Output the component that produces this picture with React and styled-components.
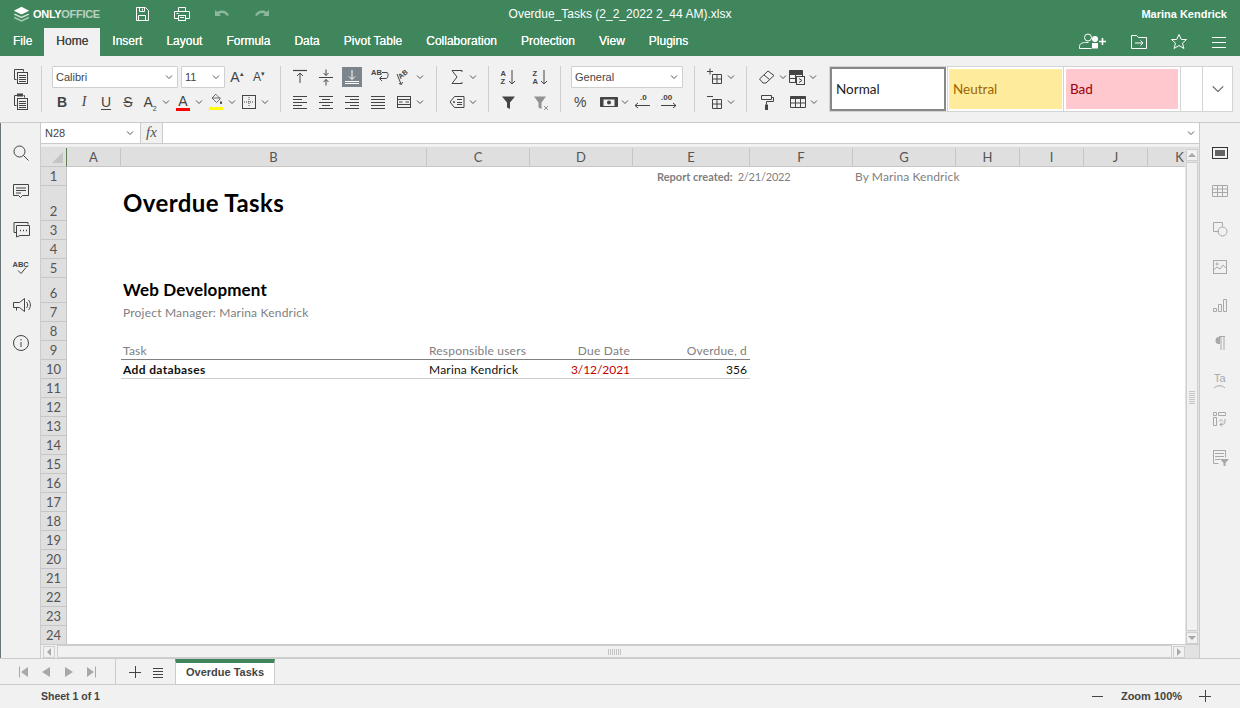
import React from 'react';
import styled, { createGlobalStyle } from 'styled-components';

const GlobalStyle = createGlobalStyle`
  html, body {
    margin: 0;
    padding: 0;
    height: 100%;
    overflow: hidden;
    background: #f1f1f1;
  }
`;

const UI_FONT = `"Liberation Sans", Arial, sans-serif`;
const CELL_FONT = `Lato, "Open Sans", sans-serif`;
const GREEN = '#40865c';
const LINE = '#cbcbcb';

const Page = styled.div`
  width: 1240px;
  height: 708px;
  display: flex;
  flex-direction: column;
  font-family: ${UI_FONT};
  font-size: 12px;
  color: #444;
`;

const TitleBar = styled.header`
  height: 28px;
  background: ${GREEN};
  color: #fff;
  display: grid;
  grid-template-columns: 1fr auto 1fr;
  align-items: center;
`;

const TitleLeft = styled.div`
  display: flex;
  align-items: center;
  padding-left: 13px;
`;

const Logo = styled.div`
  width: 87px;
  margin-right: 32px;
  display: flex;
  align-items: center;
  gap: 3px;
  font-size: 11px;
  font-weight: bold;
  letter-spacing: -0.3px;
  color: #fff;
  span { opacity: 0.62; }
`;

const QuickActions = styled.div`
  display: flex;
  gap: 20px;
`;

const DocName = styled.div`
  font-size: 12px;
`;

const UserName = styled.div`
  justify-self: end;
  padding-right: 13px;
  font-size: 11px;
  font-weight: bold;
`;

const TabBar = styled.nav`
  height: 28px;
  background: ${GREEN};
  display: flex;
  padding-left: 1px;
`;

const Tab = styled.div`
  padding: 0 12px;
  line-height: 27px;
  font-size: 12px;
  color: ${p => (p.$active ? '#444' : '#fff')};
  background: ${p => (p.$active ? '#f1f1f1' : 'transparent')};
  text-shadow: 0 0 0.4px currentColor;
`;

const TabActions = styled.div`
  margin-left: auto;
  display: flex;
  align-items: center;
  padding-right: 1px;
  color: #fff;
`;

const TabAction = styled.div`
  width: ${p => p.$w || 40}px;
  display: flex;
  justify-content: center;
`;

const Toolbar = styled.section`
  height: 66px;
  box-sizing: content-box;
  border-bottom: 1px solid ${LINE};
  display: flex;
  padding-left: 8px;
  align-items: flex-start;
`;

const Group = styled.div`
  width: ${p => p.$w}px;
  flex: none;
  box-sizing: border-box;
  padding: 10px 0 0 ${p => p.$pad || 0}px;
  display: flex;
  flex-direction: column;
  gap: 3px;
`;

const Divider = styled.div`
  width: 1px;
  height: 46px;
  flex: none;
  margin-top: 10px;
  background: #cfcfcf;
`;

const ToolRow = styled.div`
  height: 22px;
  display: flex;
  align-items: center;
  gap: ${p => p.$gap || 0}px;
`;

const ToolButton = styled.div`
  width: 20px;
  height: 20px;
  flex: none;
  margin-left: ${p => p.$ml || 0}px;
  display: flex;
  align-items: center;
  justify-content: center;
  background: ${p => (p.$active ? '#7d858c' : 'transparent')};
  color: ${p => (p.$active ? '#fff' : '#444')};
`;

const Caret = styled.div`
  width: 11px;
  height: 20px;
  flex: none;
  margin-left: ${p => p.$ml || 0}px;
  display: flex;
  align-items: center;
  justify-content: center;
`;

const GlyphBold = styled.span`
  font-size: 14px;
  font-weight: bold;
`;

const GlyphItalic = styled.span`
  font-size: 14px;
  font-style: italic;
  font-family: "Liberation Serif", serif;
`;

const GlyphUnderline = styled.span`
  font-size: 14px;
  text-decoration: underline;
  text-underline-offset: 2px;
`;

const GlyphStrike = styled.span`
  font-size: 14px;
  text-decoration: line-through;
`;

const GlyphLetter = styled.span`
  font-size: ${p => p.$size || 14}px;
  line-height: 14px;
  sub {
    font-size: 7px;
    line-height: 0;
  }
  sup {
    font-size: 7px;
    line-height: 0;
  }
`;

const ColorBar = styled.div`
  width: 14px;
  height: 3px;
  background: ${p => p.$color};
`;

const ColorGlyph = styled.div`
  display: flex;
  flex-direction: column;
  align-items: center;
  line-height: 14px;
`;

const FillGlyph = styled.div`
  margin-top: -2px;
`;

const Select = styled.div`
  width: ${p => p.$w}px;
  height: 22px;
  flex: none;
  box-sizing: border-box;
  margin-left: ${p => p.$ml || 0}px;
  background: #fff;
  border: 1px solid #cfcfcf;
  border-radius: 1px;
  display: flex;
  align-items: center;
  justify-content: space-between;
  padding: 0 4px 0 3px;
  font-size: 11px;
  color: #444;
`;

const Gallery = styled.div`
  margin-left: 7px;
  margin-top: 10px;
  width: 404px;
  height: 46px;
  box-sizing: border-box;
  flex: none;
  display: flex;
  background: #fff;
  border: 1px solid #d4d4d4;
`;

const SwatchCell = styled.div`
  width: ${p => p.$w}px;
  flex: none;
  box-sizing: border-box;
  display: flex;
  padding: ${p => p.$pad};
  border-right: 1px solid #d4d4d4;
`;

const StyleSwatch = styled.div`
  flex: 1;
  box-sizing: border-box;
  background: ${p => p.$bg};
  color: ${p => p.$color};
  border: ${p => (p.$framed ? '2px solid #888' : 'none')};
  display: flex;
  align-items: center;
  padding-left: 4px;
  font-family: ${CELL_FONT};
  font-size: 13.500px;
`;

const GalleryGap = styled.div`
  flex: 1;
  border-right: 1px solid #d4d4d4;
`;

const GalleryMore = styled.div`
  width: 29px;
  flex: none;
  display: flex;
  align-items: center;
  justify-content: center;
`;

const Workspace = styled.div`
  height: 535px;
  display: flex;
  border-bottom: 1px solid ${LINE};
`;

const SideBar = styled.aside`
  width: 41px;
  flex: none;
  box-sizing: border-box;
  display: flex;
  flex-direction: column;
  align-items: center;
  gap: 18px;
  padding-top: 20px;
  border-left: ${p => (p.$left ? '1px solid #6a7479' : '0')};
  border-right: ${p => (p.$left ? `1px solid ${LINE}` : '0')};
  color: ${p => (p.$left ? '#444' : '#a8a8a8')};
`;

const SideIcon = styled.div`
  width: 20px;
  height: 20px;
  color: ${p => (p.$dark ? '#333' : 'inherit')};
`;

const Center = styled.main`
  width: 1158px;
  flex: none;
  display: flex;
  flex-direction: column;
  border-right: 1px solid ${LINE};
  box-sizing: content-box;
  margin-right: -1px;
`;

const FormulaBar = styled.div`
  height: 20px;
  flex: none;
  display: flex;
  background: #fff;
  border-bottom: 1px solid ${LINE};
`;

const NameBox = styled.div`
  width: 99px;
  flex: none;
  box-sizing: border-box;
  display: flex;
  align-items: center;
  justify-content: space-between;
  padding: 0 6px 0 4px;
  font-size: 11px;
`;

const FxButton = styled.div`
  width: 21px;
  flex: none;
  background: #f1f1f1;
  border-left: 1px solid ${LINE};
  border-right: 1px solid ${LINE};
  text-align: center;
  line-height: 19px;
  font-family: "Liberation Serif", serif;
  font-style: italic;
  font-size: 15px;
  color: #555;
`;

const FormulaInput = styled.div`
  flex: 1;
  display: flex;
  align-items: center;
  justify-content: flex-end;
  padding-right: 4px;
`;

const SheetArea = styled.div`
  flex: 1;
  margin-top: 3px;
  display: flex;
  min-height: 0;
  background: #e2e2e2;
  border-top: 1px solid #dcdcdc;
`;

const Grid = styled.div`
  width: 1144px;
  flex: none;
  display: grid;
  grid-template-columns: 26px 54px 306px 103px 103px 117px 103px 103px 64px 64px 64px 64px;
  grid-template-rows: 19px 19px 35px 19px 19px 19px 25px repeat(18, 19px);
  background: #fff;
  overflow: hidden;
`;

const Corner = styled.div`
  grid-row: 1;
  grid-column: 1;
  background: #dfdfdf;
  border-right: 1px solid #5f7f4f;
  border-bottom: 1px solid #c6c6c6;
  position: relative;
  &::after {
    content: '';
    position: absolute;
    right: 3px;
    bottom: 3px;
    border-style: solid;
    border-width: 0 0 11px 11px;
    border-color: transparent transparent #c4c4c4 transparent;
  }
`;

const ColHead = styled.div`
  grid-row: 1;
  grid-column: ${p => p.$c};
  background: #dfdfdf;
  border-right: 1px solid #c6c6c6;
  border-bottom: 1px solid #c6c6c6;
  text-align: center;
  font-family: ${CELL_FONT};
  font-size: 13px;
  line-height: 19px;
  color: #555;
  overflow: hidden;
`;

const RowHead = styled.div`
  grid-row: ${p => p.$r};
  grid-column: 1;
  background: #dfdfdf;
  border-right: 1px solid #c6c6c6;
  border-bottom: 1px solid #c6c6c6;
  display: flex;
  align-items: flex-end;
  justify-content: center;
  font-family: ${CELL_FONT};
  font-size: 13px;
  line-height: 18px;
  color: #555;
`;

const Cell = styled.div`
  grid-row: ${p => p.$r};
  grid-column: ${p => p.$c};
  box-sizing: border-box;
  padding: 0 3px 0 2px;
  display: flex;
  align-items: flex-end;
  justify-content: ${p => (p.$right ? 'flex-end' : 'flex-start')};
  white-space: nowrap;
  font-family: ${CELL_FONT};
  font-size: ${p => p.$size || 12}px;
  font-weight: ${p => (p.$bold ? 'bold' : 'normal')};
  letter-spacing: ${p => p.$track ?? 0.2}px;
  line-height: ${p => p.$lh || (p.$line ? 16 : 18)}px;
  color: ${p => p.$color || '#808080'};
  border-bottom: ${p => (p.$line ? `1px solid ${p.$line}` : '0')};
  min-width: 0;
`;

const ReportLabel = styled.b`
  margin-left: 22px;
  margin-right: 5px;
  font-size: 11px;
  letter-spacing: 0;
`;

const VScroll = styled.div`
  width: 14px;
  flex: none;
  display: flex;
  flex-direction: column;
  align-items: center;
  background: #e2e2e2;
  padding-top: 1px;
  gap: 1px;
`;

const ScrollButton = styled.div`
  width: 12px;
  height: 12px;
  flex: none;
  box-sizing: border-box;
  background: #f1f1f1;
  border: 1px solid #cfcfcf;
  display: flex;
  align-items: center;
  justify-content: center;
`;

const Arrow = styled.div`
  width: 0;
  height: 0;
  border-style: solid;
  border-color: transparent;
  ${p => p.$dir === 'up' && 'border-width: 0 4px 4px; border-bottom-color: #a8a8a8;'}
  ${p => p.$dir === 'down' && 'border-width: 4px 4px 0; border-top-color: #a8a8a8;'}
  ${p => p.$dir === 'left' && 'border-width: 4px 4px 4px 0; border-right-color: #a8a8a8;'}
  ${p => p.$dir === 'right' && 'border-width: 4px 0 4px 4px; border-left-color: #a8a8a8;'}
`;

const ScrollThumb = styled.div`
  flex: 1;
  align-self: stretch;
  box-sizing: border-box;
  background: #f1f1f1;
  border: 1px solid #cfcfcf;
  display: flex;
  align-items: center;
  justify-content: center;
  margin: ${p => (p.$horizontal ? '0 1px 0 2px' : '0 1px')};
`;

const Grip = styled.div`
  width: ${p => (p.$horizontal ? '14px' : '6px')};
  height: ${p => (p.$horizontal ? '6px' : '14px')};
  background: repeating-linear-gradient(
    ${p => (p.$horizontal ? '90deg' : '0deg')},
    #c4c4c4 0 1px,
    transparent 1px 2px
  );
`;

const HScroll = styled.div`
  height: 13px;
  flex: none;
  display: flex;
  align-items: center;
  padding: 0 14px 0 2px;
  background: #f1f1f1;
  border-top: 1px solid ${LINE};
  box-sizing: content-box;
`;

const HScrollEnd = styled.div`
  width: 14px;
  height: 13px;
  margin-right: -14px;
  background: #e2e2e2;
  flex: none;
`;

const SheetBar = styled.div`
  height: 25px;
  flex: none;
  display: flex;
  border-bottom: 1px solid ${LINE};
`;

const NavGroup = styled.div`
  width: 115px;
  display: flex;
  align-items: center;
  border-right: 1px solid ${LINE};
`;

const NavButton = styled.div`
  width: 23px;
  margin-left: ${p => p.$ml || 0}px;
  display: flex;
  justify-content: center;
  color: ${p => (p.$dark ? '#444' : '#a8a8a8')};
`;

const SheetActions = styled.div`
  width: 52px;
  padding-left: 7px;
  display: flex;
  align-items: center;
`;

const SheetTab = styled.div`
  width: 100px;
  box-sizing: border-box;
  background: #fff;
  border-top: 4px solid ${GREEN};
  border-left: 1px solid ${LINE};
  border-right: 1px solid ${LINE};
  text-align: center;
  line-height: 18px;
  font-size: 11px;
  font-weight: bold;
  color: #444;
`;

const StatusBar = styled.footer`
  flex: 1;
  display: flex;
  align-items: center;
  padding: 0 28px 2px 41px;
  font-size: 10.500px;
  font-weight: bold;
`;

const ZoomBox = styled.div`
  margin-left: auto;
  display: flex;
  align-items: center;
`;

const ZoomLabel = styled.div`
  width: 93px;
  text-align: center;
  font-size: 11px;
`;

const IconSvg = styled.svg`
  width: ${p => (p.$size || 20) * (p.$wide || 1)}px;
  height: ${p => p.$size || 20}px;
  display: block;
  flex: none;
  fill: none;
  stroke: currentColor;
  stroke-width: 1;
  opacity: ${p => p.$fade || 1};
  text {
    stroke: none;
    fill: currentColor;
    font-family: ${UI_FONT};
  }
  .fill {
    fill: currentColor;
    stroke: none;
  }
`;

const paths = {
  copy: <><path d="M12.500 4.500v-2h-9v10h2" /><rect x="6.500" y="5.500" width="10" height="11" /><path d="M8 8.500h7M8 10.500h7M8 12.500h7M8 14.500h7" /></>,
  paste: <><path d="M6.500 3.500h-3v10h2" /><path className="fill" d="M6 1.500h6v3H6z" /><path d="M12.500 3.500h1v2" /><rect x="6.500" y="6.500" width="10" height="11" /><path d="M8 9.500h7M8 11.500h7M8 13.500h7M8 15.500h7" /></>,
  save: <><path d="M4.500 3.500h9l3 3v10h-12z" /><path d="M7.500 3.500v4h5v-4M10.500 4.500v2M6.500 16.500v-5h7v5" /></>,
  print: <><path d="M6.500 7v-3.500h7V7" /><path d="M6.500 14.500h-4v-7h15v7h-4" /><rect x="6.500" y="11.500" width="7" height="5" /><path d="M8 13.500h4M4.500 9.500h2" /></>,
  undo: <path className="fill" d="M3 6v6h6l-2-2c3-2 6-1 8 2l2-1C15 7 10 5 5.500 8z" />,
  redo: <path className="fill" d="M17 6v6h-6l2-2c-3-2-6-1-8 2l-2-1C5 7 10 5 14.500 8z" />,
  addUser: <><circle cx="10" cy="5.500" r="3.500" /><path d="M1.500 16.500v-2c0-3 3-4 6-4h3" /><path d="M1.500 16.500h12" /><circle className="fill" cx="17" cy="7" r="3" /><path className="fill" d="M14 11h6v5.500h-6z" /><path d="M21 9.500h7M24.500 6v7" strokeWidth="1.600" /></>,
  move: <><path d="M2.500 16.500v-13h5l2 2h8v11z" /><path d="M6 11h8M11.500 8.500l2.500 2.500-2.500 2.500" /></>,
  star: <path d="M10 2.500l2.300 5h5.200l-4 3.600 1.400 5.400-4.900-3-4.900 3 1.400-5.400-4-3.600h5.200z" />,
  menu: <path d="M3 5.500h14M3 10.500h14M3 15.500h14" />,
  alignTop: <><path d="M3 3.500h14" strokeWidth="1.200" /><path d="M10 16V6M7 9l3-3 3 3" /></>,
  alignMiddle: <><path d="M3 10.500h14" /><path d="M10 2.500v6M7.500 6l2.500 2.500L12.500 6M10 18.500v-6M7.500 15l2.500-2.500 2.500 2.500" /></>,
  alignBottom: <><path d="M3 14.500h14M3 16.500h14" /><path d="M10 3v9M7 9.500l3 3 3-3" /></>,
  wrap: <><text x="1" y="8" fontSize="7.500" fontWeight="bold">AB</text><path d="M12 5.500h5c1.500 0 1.500 6-1 6h-6M12 9l-2.500 2.500L12 14" /></>,
  orient: <><text x="5" y="10" fontSize="7" fontWeight="bold" transform="rotate(-40 9 9)">AB</text><path d="M3 7l4 10M5 16.500l2.500 1 1-2.500" /></>,
  left: <path d="M3 4.500h14M3 7.500h9M3 10.500h14M3 13.500h9M3 16.500h14" />,
  center: <path d="M3 4.500h14M6 7.500h8M3 10.500h14M6 13.500h8M3 16.500h14" />,
  right: <path d="M3 4.500h14M8 7.500h9M3 10.500h14M8 13.500h9M3 16.500h14" />,
  justify: <path d="M3 4.500h14M3 7.500h14M3 10.500h14M3 13.500h14M3 16.500h14" />,
  merge: <><rect x="3.500" y="4.500" width="13" height="11" /><path d="M3.500 7.500h13M3.500 12.500h13M5 10h3.500M11.500 10H15" /></>,
  sum: <path d="M15 5V3.500H5L10 10l-5 6.500h10V15" />,
  tag: <><path d="M7.500 4.500h9.500v11H7.500L3 10z" /><circle className="fill" cx="7" cy="10" r="1" /><path d="M10 7.500h5M10 10.500h5M10 12.500h5" /></>,
  sortAsc: <><text x="1.500" y="8.500" fontSize="7.500" fontWeight="bold">A</text><text x="1.500" y="17" fontSize="7.500" fontWeight="bold">Z</text><path d="M13 3v14M10 14l3 3 3-3" /></>,
  sortDesc: <><text x="1.500" y="8.500" fontSize="7.500" fontWeight="bold">Z</text><text x="1.500" y="17" fontSize="7.500" fontWeight="bold">A</text><path d="M13 3v14M10 14l3 3 3-3" /></>,
  filter: <path className="fill" d="M3 4.500h13l-5 6V17l-3-1.500v-5z" />,
  clearFilter: <><path className="fill" d="M3 4.500h12l-4.500 6V17l-3-1.500v-5z" opacity="0.55" /><path d="M13 14l4 4M17 14l-4 4" opacity="0.55" /></>,
  percent: <text x="3" y="15" fontSize="14">%</text>,
  money: <><path d="M1.500 5.500h17v9h-17z" /><path className="fill" d="M1.500 5.500h17v2h-17zM1.500 7.500h3v7h-3zM15.500 7.500h3v7h-3z" /><circle className="fill" cx="10" cy="10.500" r="2" /></>,
  decLess: <><text x="8" y="8" fontSize="8" fontWeight="bold">.0</text><path d="M18 13.500H3M6 11l-3 2.500L6 16" /></>,
  decMore: <><text x="2" y="8" fontSize="8" fontWeight="bold">.00</text><path d="M2 13.500h15M14 11l3 2.500-3 2.500" /></>,
  insert: <><path d="M2 4.500h6M5 1.500v6" /><path d="M7.500 7.500h9v9h-9zM12 7.500v9M7.500 12h9" /></>,
  remove: <><path d="M2 4.500h6" /><path d="M7.500 7.500h9v9h-9zM12 7.500v9M7.500 12h9" /></>,
  eraser: <><path d="M2.500 12L11 4l6 4.500L9 16H6z" /><path d="M7 8l5.500 4.500" /></>,
  formatTable: <><path d="M2.500 3.500h13v12h-13zM2.500 7.500h13M2.500 11.500h6M8.500 7.500v8" /><path className="fill" d="M2.500 3.500h13v4h-13z" /><rect x="9.500" y="9.500" width="8" height="8" fill="#f1f1f1" /><path d="M12 11.500l3 2-3 2" /></>,
  painter: <><path d="M4.500 3.500h10v4h-10z" /><path d="M14.500 5.500h2v4h-7v3" /><path className="fill" d="M8 12.500h3V18H8z" /></>,
  table: <><path d="M2.500 4.500h15v11h-15z" /><path className="fill" d="M2.500 4.500h15v2.500h-15z" /><path d="M2.500 11h15M7.500 7v8.500M12.500 7v8.500" /></>,
  borders: <><rect x="3.500" y="3.500" width="13" height="13" /><path d="M10 5v10M5 10h10" strokeDasharray="1 1" /></>,
  fill: <><path d="M4 8l5-5 6 6-5 5-6-6zM4 8h11" /><path className="fill" d="M16 11.500c1 1.500 1.500 2 1.500 3a1.500 1.500 0 0 1-3 0c0-1 .5-1.500 1.500-3z" /></>,
  search: <><circle cx="8.500" cy="8.500" r="5.500" /><path d="M12.500 12.500l5 5" /></>,
  comment: <><path d="M2.500 3.500h15v11h-6l-2 2-2-2h-5z" /><path d="M5 7h10M5 9.500h10M5 12h5" /></>,
  chat: <><path d="M5.500 13.500h-2.500v-10h14v2" /><path d="M5.500 6.500h13v10H9l-3.500 1.500z" /><path d="M9 11.500h1M12 11.500h1M15 11.500h1" strokeWidth="1.500" /></>,
  spell: <><text x="1.500" y="10" fontSize="7.500" fontWeight="bold">ABC</text><path d="M7 13.500l3 3 5-6" /></>,
  speaker: <><path d="M2.500 7.500h6l5-4v13l-5-4h-6zM5.500 12.500v3" /><path d="M15.500 7c1.500 1.500 1.500 4.500 0 6M17.500 5c2.500 3 2.500 7 0 10" /></>,
  info: <><circle cx="10" cy="10" r="7.500" /><path d="M10 9v5" /><path d="M10 6v1.500" /></>,
  cellPane: <><rect x="2.500" y="4.500" width="15" height="11" /><path className="fill" d="M5 7h10v6H5z" opacity="0.75" /></>,
  tablePane: <path d="M2.500 4.500h15v11h-15zM2.500 8h15M2.500 11.500h15M7.500 4.500v11M12.500 4.500v11" />,
  shape: <><path d="M9 12.500H3.500v-9h9v4" /><circle cx="12.500" cy="12.500" r="4.500" /></>,
  image: <><rect x="3.500" y="3.500" width="13" height="13" /><path d="M3.500 13l3.500-3 3 2 3-4 3 3" /><circle cx="7" cy="7" r="1" /></>,
  chart: <path d="M3.500 13.500h3v3h-3zM8.500 9.500h3v7h-3zM13.500 4.500h3v12h-3z" />,
  para: <><path className="fill" d="M12 4H9a3.500 3.500 0 0 0 0 7h1V4z" /><path d="M11 4v13M14 4v13M9 3.500h6" /></>,
  textArt: <><text x="4" y="11" fontSize="11">Ta</text><path d="M4 17c3-3 8-3 11 0" /></>,
  pivot: <><path d="M3.500 3.500h3v3h-3zM8.500 3.500h7v3h-7zM3.500 8.500h3v8h-3z" /><path d="M15 10v3c0 2-2 2.500-5 2.500M12 13.500l-2 2 2 2M9 12.500l2-2 2 2" /></>,
  slicer: <><path d="M8.500 16.500h-5v-13h12v7" /><path d="M5 6.500h9M5 9.500h9M5 12.500h5" /><path className="fill" d="M10 12h9l-3.500 4v3H13.500v-3z" /></>
};

const Icon = ({ name, size, fade }) => (
  <IconSvg $size={size} $fade={fade} viewBox="0 0 20 20">{paths[name]}</IconSvg>
);

const Chevron = ({ big }) => (
  <IconSvg $size={big ? 14 : 8} viewBox="0 0 8 8">
    <path d="M1 2.500l3 3 3-3" strokeWidth={big ? 0.6 : 1} stroke="#555" />
  </IconSvg>
);

const Btn = ({ name, active, ml, children }) => (
  <ToolButton $active={active} $ml={ml}>{name ? <Icon name={name} /> : children}</ToolButton>
);

const More = ({ ml }) => <Caret $ml={ml}><Chevron /></Caret>;

const columns = ['A', 'B', 'C', 'D', 'E', 'F', 'G', 'H', 'I', 'J', 'K'];
const tabs = ['Home', 'Insert', 'Layout', 'Formula', 'Data', 'Pivot Table', 'Collaboration', 'Protection', 'View', 'Plugins'];
const rows = Array.from({ length: 24 }, (_, i) => i + 1);
const leftIcons = ['search', 'comment', 'chat', 'spell', 'speaker', 'info'];
const rightIcons = ['cellPane', 'tablePane', 'shape', 'image', 'chart', 'para', 'textArt', 'pivot', 'slicer'];

export default function App() {
  return (
    <Page>
      <GlobalStyle />
      <TitleBar>
        <TitleLeft>
          <Logo>
            <IconSvg $size={17} viewBox="0 0 20 20">
              <path className="fill" d="M10 1l9 4.500-9 4.500-9-4.500z" />
              <path d="M1.500 9.500l8.500 4 8.500-4" strokeWidth="1.800" opacity="0.75" />
              <path d="M1.500 13.500l8.500 4 8.500-4" strokeWidth="1.800" opacity="0.55" />
            </IconSvg>
            <div>ONLY<span>OFFICE</span></div>
          </Logo>
          <QuickActions>
            <Icon name="save" />
            <Icon name="print" />
            <Icon name="undo" fade={0.4} />
            <Icon name="redo" fade={0.4} />
          </QuickActions>
        </TitleLeft>
        <DocName>Overdue_Tasks (2_2_2022 2_44 AM).xlsx</DocName>
        <UserName>Marina Kendrick</UserName>
      </TitleBar>

      <TabBar>
        <Tab>File</Tab>
        {tabs.map(t => <Tab key={t} $active={t === 'Home'}>{t}</Tab>)}
        <TabActions>
          <TabAction $w={52}><IconSvg $size={20} $wide={1.500} viewBox="0 0 30 20">{paths.addUser}</IconSvg></TabAction>
          <TabAction><Icon name="move" /></TabAction>
          <TabAction><Icon name="star" /></TabAction>
          <TabAction><Icon name="menu" /></TabAction>
        </TabActions>
      </TabBar>

      <Toolbar>
        <Group $w={33} $pad={3}>
          <ToolRow><Btn name="copy" /></ToolRow>
          <ToolRow><Btn name="paste" /></ToolRow>
        </Group>
        <Divider />
        <Group $w={238} $pad={10}>
          <ToolRow>
            <Select $w={126}>Calibri<Chevron /></Select>
            <Select $w={44} $ml={3}>11<Chevron /></Select>
            <Btn ml={2}><GlyphLetter>A<sup>▴</sup></GlyphLetter></Btn>
            <Btn ml={2}><GlyphLetter $size={12}>A<sup>▾</sup></GlyphLetter></Btn>
          </ToolRow>
          <ToolRow>
            <Btn><GlyphBold>B</GlyphBold></Btn>
            <Btn ml={2}><GlyphItalic>I</GlyphItalic></Btn>
            <Btn ml={2}><GlyphUnderline>U</GlyphUnderline></Btn>
            <Btn ml={2}><GlyphStrike>S</GlyphStrike></Btn>
            <Btn ml={2}><GlyphLetter>A<sub>2</sub></GlyphLetter></Btn>
            <More />
            <Btn ml={2}><ColorGlyph><GlyphLetter>A</GlyphLetter><ColorBar $color="#ff0000" /></ColorGlyph></Btn>
            <More />
            <Btn ml={2}><ColorGlyph><FillGlyph><Icon name="fill" size={15} /></FillGlyph><ColorBar $color="#ffff00" /></ColorGlyph></Btn>
            <More />
            <Btn ml={2} name="borders" />
            <More />
          </ToolRow>
        </Group>
        <Divider />
        <Group $w={155} $pad={9}>
          <ToolRow $gap={6}>
            <Btn name="alignTop" />
            <Btn name="alignMiddle" />
            <Btn name="alignBottom" active />
            <Btn name="wrap" ml={2} />
            <Btn name="orient" ml={-2} />
            <More ml={-6} />
          </ToolRow>
          <ToolRow $gap={6}>
            <Btn name="left" />
            <Btn name="center" />
            <Btn name="right" />
            <Btn name="justify" />
            <Btn name="merge" />
            <More ml={-6} />
          </ToolRow>
        </Group>
        <Divider />
        <Group $w={51} $pad={10}>
          <ToolRow><Btn name="sum" /><More /></ToolRow>
          <ToolRow><Btn name="tag" /><More /></ToolRow>
        </Group>
        <Divider />
        <Group $w={71} $pad={10}>
          <ToolRow $gap={12}><Btn name="sortAsc" /><Btn name="sortDesc" /></ToolRow>
          <ToolRow $gap={12}><Btn name="filter" /><Btn name="clearFilter" /></ToolRow>
        </Group>
        <Divider />
        <Group $w={133} $pad={10}>
          <ToolRow><Select $w={112}>General<Chevron /></Select></ToolRow>
          <ToolRow>
            <Btn name="percent" />
            <Btn name="money" ml={8} />
            <More />
            <Btn name="decLess" ml={2} />
            <Btn name="decMore" ml={7} />
          </ToolRow>
        </Group>
        <Divider />
        <Group $w={51} $pad={10}>
          <ToolRow><Btn name="insert" /><More /></ToolRow>
          <ToolRow><Btn name="remove" /><More /></ToolRow>
        </Group>
        <Divider />
        <Group $w={75} $pad={10}>
          <ToolRow><Btn name="eraser" /><More /><Btn name="formatTable" ml={-1} /><More /></ToolRow>
          <ToolRow><Btn name="painter" /><Btn name="table" ml={11} /><More /></ToolRow>
        </Group>
        <Gallery>
          <SwatchCell $w={118} $pad="0 1px 0 0"><StyleSwatch $bg="#fff" $color="#222" $framed>Normal</StyleSwatch></SwatchCell>
          <SwatchCell $w={116} $pad="2px 1px"><StyleSwatch $bg="#ffeb9c" $color="#9c6500">Neutral</StyleSwatch></SwatchCell>
          <SwatchCell $w={117} $pad="2px"><StyleSwatch $bg="#ffc7ce" $color="#9c0006">Bad</StyleSwatch></SwatchCell>
          <GalleryGap />
          <GalleryMore><Chevron big /></GalleryMore>
        </Gallery>
      </Toolbar>

      <Workspace>
        <SideBar $left>
          {leftIcons.map(n => <SideIcon key={n}><Icon name={n} /></SideIcon>)}
        </SideBar>
        <Center>
          <FormulaBar>
            <NameBox>N28<Chevron /></NameBox>
            <FxButton>fx</FxButton>
            <FormulaInput><Chevron /></FormulaInput>
          </FormulaBar>
          <SheetArea>
            <Grid>
              <Corner />
              {columns.map((c, i) => <ColHead key={c} $c={i + 2}>{c}</ColHead>)}
              {rows.map(r => <RowHead key={r} $r={r + 1}>{r}</RowHead>)}

              <Cell $r={2} $c="6 / 8" $size={11} $track={-0.2}>
                <ReportLabel>Report created:</ReportLabel>2/21/2022
              </Cell>
              <Cell $r={2} $c="8 / 10" $track={0.1}>By Marina Kendrick</Cell>
              <Cell $r={3} $c={3} $size={24} $bold $track={0.4} $color="#000" $lh={36}>Overdue Tasks</Cell>
              <Cell $r={7} $c={3} $size={17} $bold $track={0.13} $color="#000" $lh={26}>Web Development</Cell>
              <Cell $r={8} $c={3}>Project Manager: Marina Kendrick</Cell>

              <Cell $r={10} $c={3} $line="#808080">Task</Cell>
              <Cell $r={10} $c={4} $line="#808080">Responsible users</Cell>
              <Cell $r={10} $c={5} $right $line="#808080">Due Date</Cell>
              <Cell $r={10} $c={6} $right $line="#808080">Overdue, d</Cell>

              <Cell $r={11} $c={3} $bold $track={0.35} $color="#111" $line="#cfcfcf">Add databases</Cell>
              <Cell $r={11} $c={4} $color="#111" $line="#cfcfcf">Marina Kendrick</Cell>
              <Cell $r={11} $c={5} $right $track={-0.05} $color="#c00000" $line="#cfcfcf">3/12/2021</Cell>
              <Cell $r={11} $c={6} $right $track={0} $color="#111" $line="#cfcfcf">356</Cell>
            </Grid>
            <VScroll>
              <ScrollButton><Arrow $dir="up" /></ScrollButton>
              <ScrollThumb><Grip /></ScrollThumb>
              <ScrollButton><Arrow $dir="down" /></ScrollButton>
            </VScroll>
          </SheetArea>
          <HScroll>
            <ScrollButton><Arrow $dir="left" /></ScrollButton>
            <ScrollThumb $horizontal><Grip $horizontal /></ScrollThumb>
            <ScrollButton><Arrow $dir="right" /></ScrollButton>
            <HScrollEnd />
          </HScroll>
        </Center>
        <SideBar>
          {rightIcons.map((n, i) => <SideIcon key={n} $dark={i === 0}><Icon name={n} /></SideIcon>)}
        </SideBar>
      </Workspace>

      <SheetBar>
        <NavGroup>
          <NavButton $ml={11}><IconSvg $size={14} viewBox="0 0 14 14"><path className="fill" d="M3 1.500h1v11H3zM12 2v10L5 7z" /></IconSvg></NavButton>
          <NavButton><IconSvg $size={14} viewBox="0 0 14 14"><path className="fill" d="M11 2v10L3 7z" /></IconSvg></NavButton>
          <NavButton><IconSvg $size={14} viewBox="0 0 14 14"><path className="fill" d="M3 2v10l8-5z" /></IconSvg></NavButton>
          <NavButton><IconSvg $size={14} viewBox="0 0 14 14"><path className="fill" d="M10 1.500h1v11h-1zM2 2v10l7-5z" /></IconSvg></NavButton>
        </NavGroup>
        <SheetActions>
          <NavButton $dark><IconSvg $size={14} viewBox="0 0 14 14"><path d="M1 7.500h12M7.500 1v12" /></IconSvg></NavButton>
          <NavButton $dark><IconSvg $size={14} viewBox="0 0 14 14"><path d="M2 3.500h10M2 6.500h10M2 9.500h10M2 12.500h10" /></IconSvg></NavButton>
        </SheetActions>
        <SheetTab>Overdue Tasks</SheetTab>
      </SheetBar>

      <StatusBar>
        Sheet 1 of 1
        <ZoomBox>
          <IconSvg $size={14} viewBox="0 0 14 14"><path d="M1 7.500h11" /></IconSvg>
          <ZoomLabel>Zoom 100%</ZoomLabel>
          <IconSvg $size={14} viewBox="0 0 14 14"><path d="M1 7.500h12M7.500 1v12" /></IconSvg>
        </ZoomBox>
      </StatusBar>
    </Page>
  );
}
